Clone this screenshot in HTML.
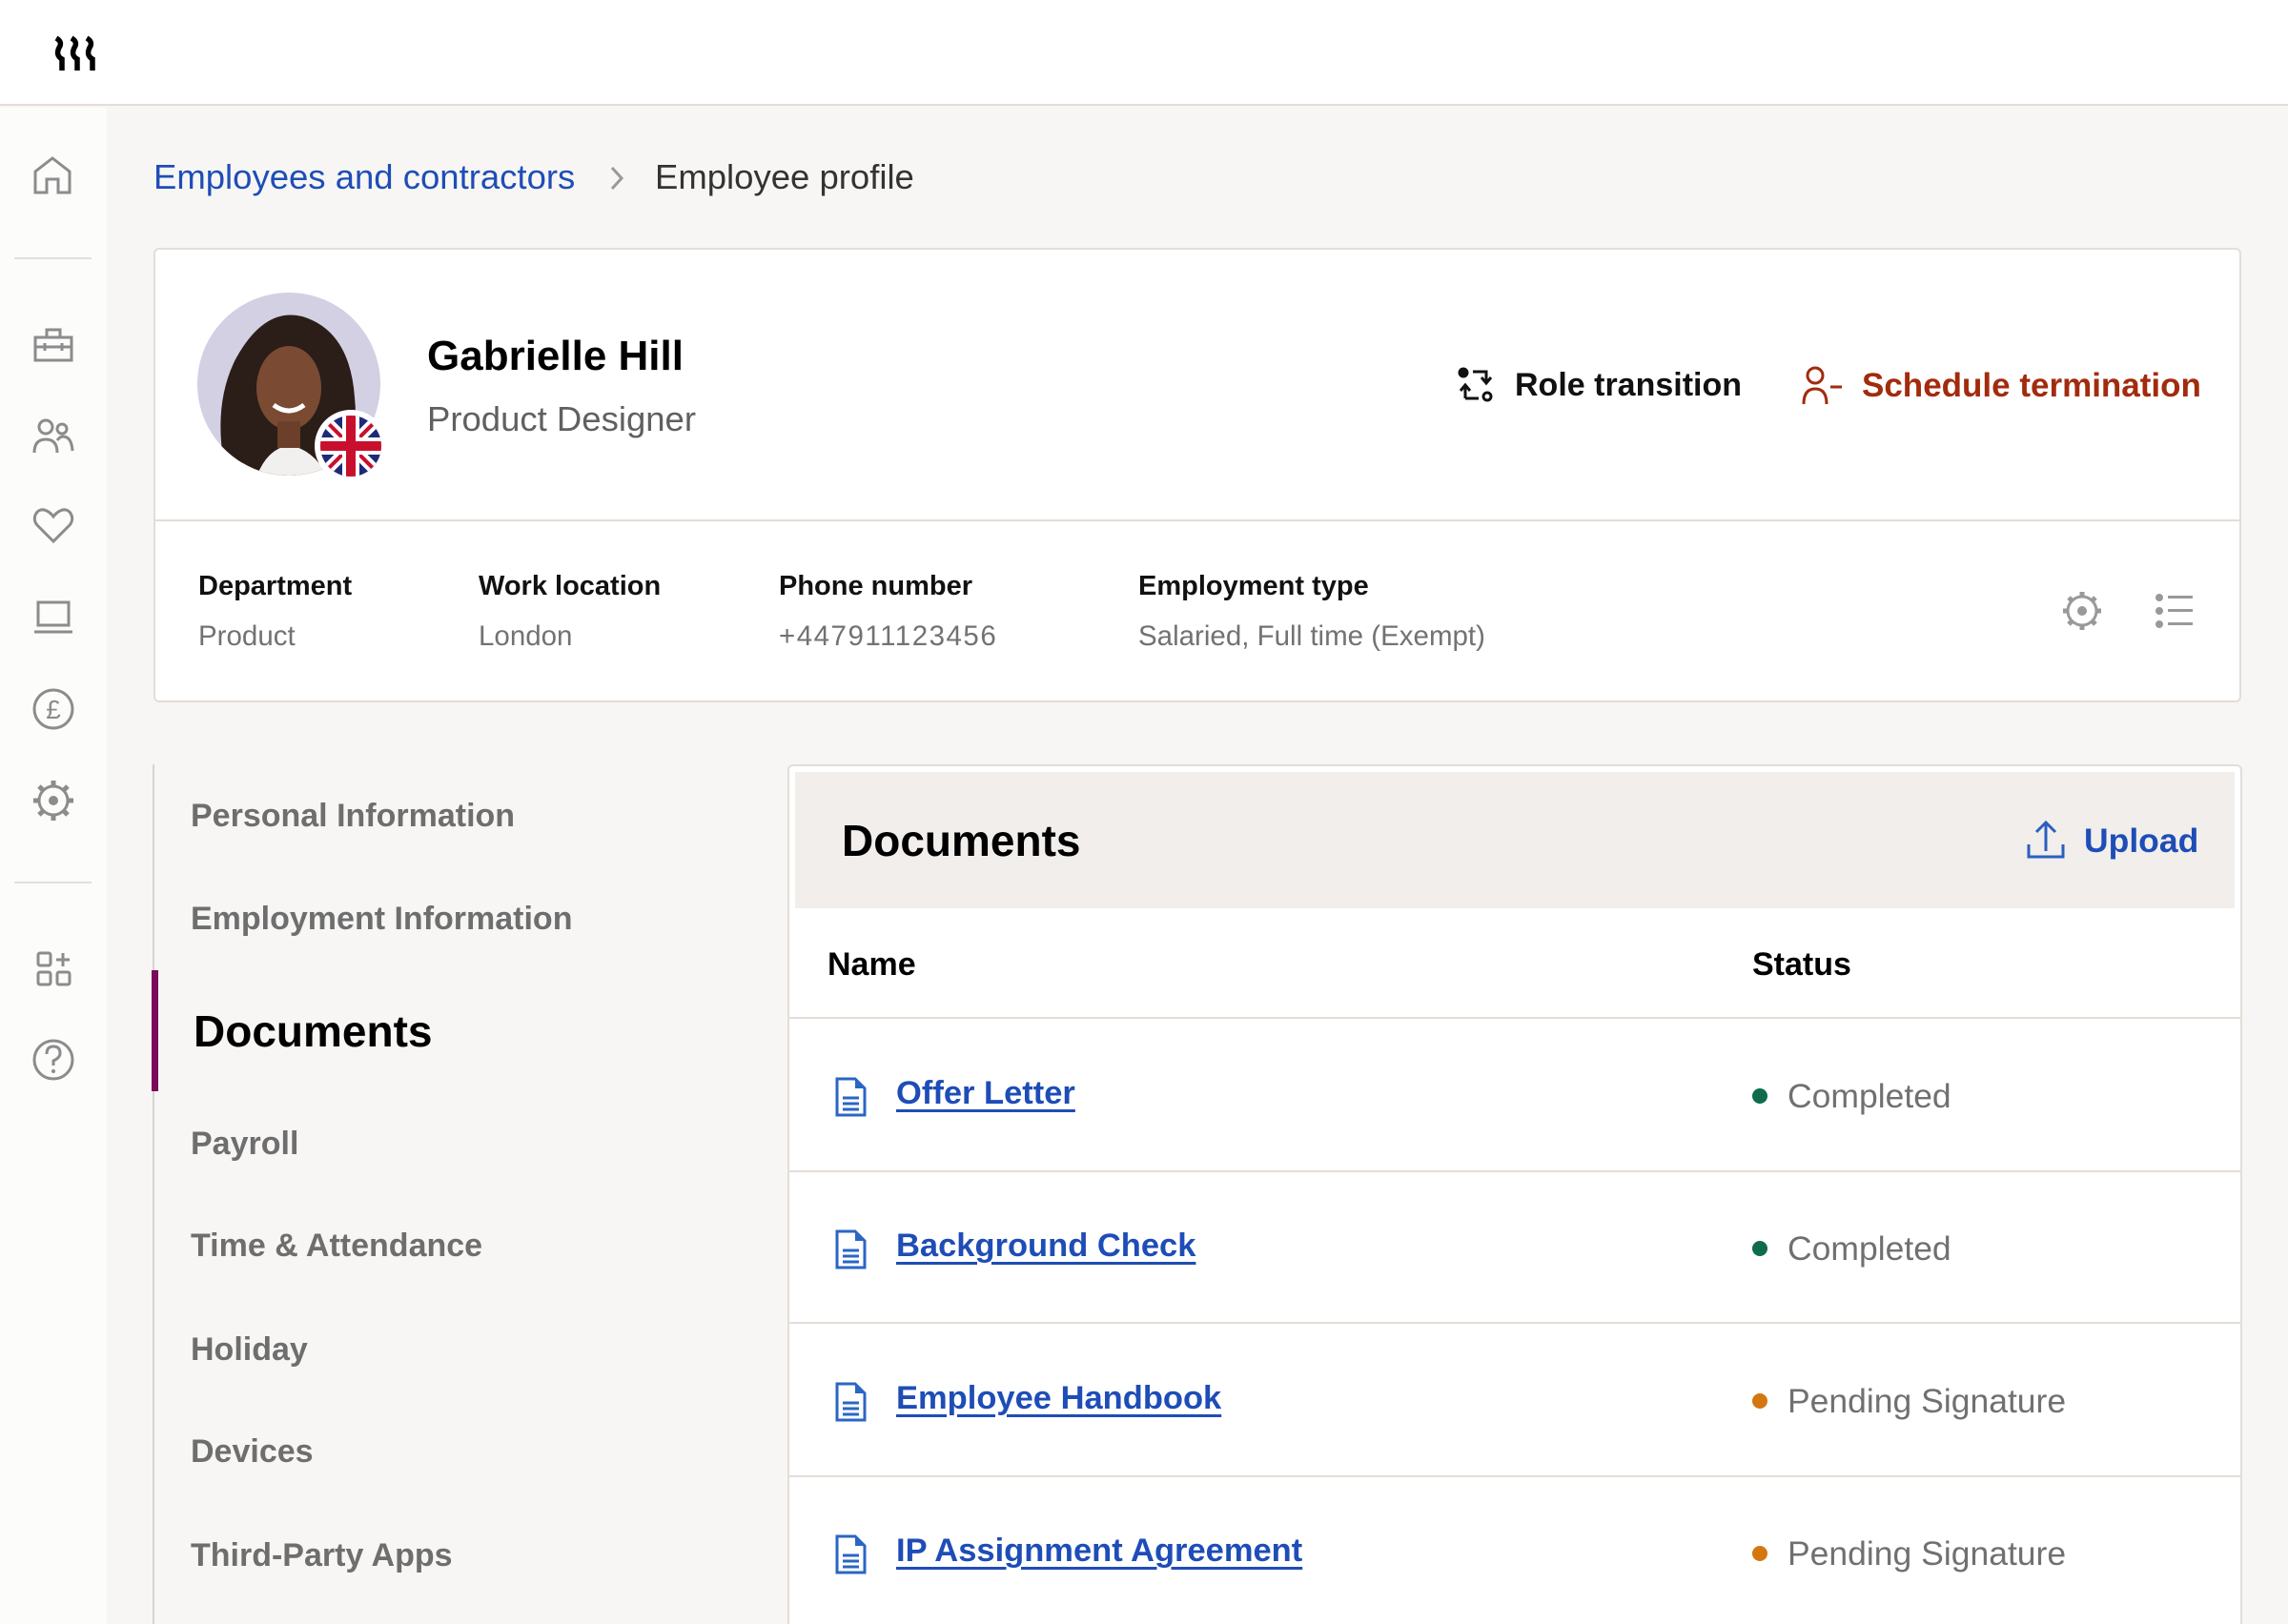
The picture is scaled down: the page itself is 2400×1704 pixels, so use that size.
<!DOCTYPE html>
<html><head><meta charset="utf-8"><style>
*{margin:0;padding:0;box-sizing:border-box}
html,body{overflow:hidden}
body{width:2400px;height:1704px;overflow:hidden;background:#f7f6f4;font-family:"Liberation Sans",sans-serif;position:relative;color:#000}
.a{position:absolute;white-space:nowrap;line-height:1}
svg{position:absolute;overflow:visible}
.si{stroke:#8c8c8c;stroke-width:3;fill:none}
.lbl{font-size:29px;font-weight:600;color:#111}
.val{font-size:29.5px;color:#727272}
.nav{font-size:34px;font-weight:600;color:#6e6e6e;left:200px}
.lnk{font-size:34.5px;font-weight:600;color:#1e4db7;text-decoration:underline;text-decoration-thickness:3px;text-underline-offset:6px;left:940px}
.st{font-size:35.5px;color:#707070;left:1875px}
.dot{position:absolute;width:16px;height:16px;border-radius:50%;left:1838px}
.row{position:absolute;left:828px;width:1522px;height:2px;background:#e4ddd6}
</style></head><body>
<!-- header -->
<div style="position:absolute;left:0;top:0;width:2400px;height:111px;background:#fff;border-bottom:2px solid #e4ddd6"></div>
<svg style="left:56px;top:38px" width="50" height="36" viewBox="0 0 50 36">
<g fill="none" stroke="#000" stroke-width="5.5"><path d="M3 2 q7 4 3 10 q-4 8 3 12 v12"/><path d="M19 2 q7 4 3 10 q-4 8 3 12 v12"/><path d="M35 2 q7 4 3 10 q-4 8 3 12 v12"/></g></svg>
<!-- sidebar -->
<div style="position:absolute;left:0;top:113px;width:112px;height:1591px;background:#fcfcfb"></div>
<svg style="left:35px;top:164px" width="40" height="40"><path class="si" d="M2 38 V16 L20 2 L38 16 V38 H26 V24 H14 V38 Z"/></svg>
<div style="position:absolute;left:15px;top:270px;width:81px;height:2px;background:#e2e0dd"></div>
<svg style="left:35px;top:342px" width="42" height="38"><g class="si"><path d="M2 12 H40 V36 H2 Z M14 12 V4 H28 V12 M2 22 H40 M12 18 V26 M30 18 V26"/></g></svg>
<svg style="left:35px;top:438px" width="42" height="38"><g class="si"><circle cx="13" cy="10" r="7"/><circle cx="30" cy="12" r="5"/><path d="M1 37 q0 -14 12 -14 q12 0 12 14 M25 24 q3 -4 6 -4 q9 0 10 15"/></g></svg>
<svg style="left:35px;top:532px" width="42" height="38"><path class="si" d="M21 36 L4 19 C-3 11 5 -1 14 4 Q18 6 21 10 Q24 6 28 4 C37 -1 45 11 38 19 Z"/></svg>
<svg style="left:35px;top:630px" width="42" height="36"><g class="si"><path d="M5 2 H37 V26 H5 Z"/><path d="M1 33 H41"/></g></svg>
<svg style="left:34px;top:722px" width="44" height="44"><g class="si"><circle cx="22" cy="22" r="20"/></g><text x="22" y="32" text-anchor="middle" font-size="28" font-family="Liberation Sans" fill="#8c8c8c">£</text></svg>
<svg style="left:34px;top:818px" width="44" height="44"><g class="si"><circle cx="22" cy="22" r="15"/><path d="M22 1 V8 M22 36 V43 M1 22 H8 M36 22 H43 M7 7 L12 12 M32 32 L37 37 M37 7 L32 12 M7 37 L12 32" stroke-width="5"/></g><circle cx="22" cy="22" r="5" fill="#8c8c8c"/></svg>
<div style="position:absolute;left:15px;top:925px;width:81px;height:2px;background:#e2e0dd"></div>
<svg style="left:38px;top:998px" width="38" height="38"><g class="si"><rect x="2" y="2" width="13" height="13" rx="2"/><rect x="2" y="22" width="13" height="13" rx="2"/><rect x="22" y="22" width="13" height="13" rx="2"/><path d="M28 2 V16 M21 9 H35"/></g></svg>
<svg style="left:34px;top:1090px" width="44" height="44"><g class="si"><circle cx="22" cy="22" r="20"/><path d="M15 16 q0 -8 7 -8 q7 0 7 7 q0 5 -7 8 v5"/></g><circle cx="22" cy="34" r="2" fill="#8c8c8c"/></svg>
<!-- breadcrumb -->
<div class="a" style="left:161px;top:168px;font-size:36.5px;color:#1e4db7;font-weight:500">Employees and contractors</div>
<svg style="left:640px;top:174px" width="14" height="26"><path d="M2 2 L12 13 L2 24" stroke="#999" stroke-width="3" fill="none"/></svg>
<div class="a" style="left:687px;top:168px;font-size:36.5px;color:#333;font-weight:500">Employee profile</div>
<!-- profile card -->
<div style="position:absolute;left:161px;top:260px;width:2190px;height:477px;background:#fff;border:2px solid #e4ddd6;border-radius:6px"></div>
<div style="position:absolute;left:163px;top:545px;width:2186px;height:2px;background:#e4ddd6"></div>
<svg style="left:207px;top:307px" width="200" height="200">
<defs><clipPath id="c"><circle cx="96" cy="96" r="96"/></clipPath></defs>
<circle cx="96" cy="96" r="96" fill="#d3d0e4"/>
<g clip-path="url(#c)">
<path d="M30 190 Q15 120 40 70 Q70 15 110 25 Q160 40 165 110 Q170 160 150 200 Z" fill="#2b1d18"/>
<path d="M60 200 Q70 165 96 160 Q125 165 140 200 Z" fill="#f2f0ee"/>
<ellipse cx="96" cy="100" rx="34" ry="44" fill="#7a4a32"/>
<rect x="84" y="135" width="24" height="28" fill="#6c3f2a"/>
<path d="M80 118 Q96 130 112 118" stroke="#fff" stroke-width="5" fill="none"/>
</g></svg>
<svg style="left:330px;top:430px" width="76" height="76">
<defs><clipPath id="f"><circle cx="38" cy="38" r="32"/></clipPath></defs>
<circle cx="38" cy="38" r="38" fill="#fff"/>
<g clip-path="url(#f)"><rect width="76" height="76" fill="#1e2a78"/>
<path d="M0 0 L76 76 M76 0 L0 76" stroke="#fff" stroke-width="12"/>
<path d="M0 0 L76 76 M76 0 L0 76" stroke="#c8102e" stroke-width="4"/>
<path d="M38 0 V76 M0 38 H76" stroke="#fff" stroke-width="18"/>
<path d="M38 0 V76 M0 38 H76" stroke="#c8102e" stroke-width="10"/></g></svg>
<div class="a" style="left:448px;top:352px;font-size:44px;font-weight:600;color:#000">Gabrielle Hill</div>
<div class="a" style="left:448px;top:422px;font-size:36.5px;color:#606060">Product Designer</div>
<svg style="left:1529px;top:385px" width="38" height="38"><g fill="none" stroke="#111" stroke-width="3"><circle cx="6" cy="6" r="4" fill="#111"/><path d="M16 5 H30 V16 M25 11 L30 17 L35 11"/><path d="M8 33 H22 M8 33 V20 M3 25 L8 19 L13 25"/><circle cx="31" cy="31" r="4"/></g></svg>
<div class="a" style="left:1589px;top:387px;font-size:34px;font-weight:600;color:#111">Role transition</div>
<svg style="left:1890px;top:384px" width="46" height="40"><g fill="none" stroke="#a22b0d" stroke-width="3"><circle cx="14" cy="10" r="8"/><path d="M2 40 q0 -16 12 -16 q12 0 12 16 M30 22 H42"/></g></svg>
<div class="a" style="left:1953px;top:387px;font-size:35px;font-weight:600;color:#a22b0d">Schedule termination</div>
<div class="a lbl" style="left:208px;top:601px">Department</div>
<div class="a val" style="left:208px;top:653px">Product</div>
<div class="a lbl" style="left:502px;top:601px">Work location</div>
<div class="a val" style="left:502px;top:653px">London</div>
<div class="a lbl" style="left:817px;top:601px">Phone number</div>
<div class="a val" style="left:817px;top:653px;letter-spacing:1.5px">+447911123456</div>
<div class="a lbl" style="left:1194px;top:601px">Employment type</div>
<div class="a val" style="left:1194px;top:653px">Salaried, Full time (Exempt)</div>
<svg style="left:2162px;top:619px" width="44" height="44"><g fill="none" stroke="#999" stroke-width="3"><circle cx="22" cy="22" r="15"/><path d="M22 2 V8 M22 36 V42 M2 22 H8 M36 22 H42 M8 8 L12 12 M32 32 L36 36 M36 8 L32 12 M8 36 L12 32" stroke-width="5"/></g><circle cx="22" cy="22" r="5" fill="#999"/></svg>
<svg style="left:2260px;top:622px" width="42" height="40"><g fill="#999"><circle cx="5" cy="5" r="4"/><circle cx="5" cy="19" r="4"/><circle cx="5" cy="33" r="4"/><rect x="14" y="3" width="26" height="3"/><rect x="14" y="17" width="26" height="3"/><rect x="14" y="31" width="26" height="3"/></g></svg>
<!-- left nav -->
<div style="position:absolute;left:160px;top:802px;width:2px;height:902px;background:#d6d3cf"></div>
<div style="position:absolute;left:159px;top:1018px;width:7px;height:127px;background:#7a0b5b"></div>
<div class="a nav" style="top:839px">Personal Information</div>
<div class="a nav" style="top:947px">Employment Information</div>
<div class="a" style="left:203px;top:1059px;font-size:46px;font-weight:600;color:#000">Documents</div>
<div class="a nav" style="top:1183px">Payroll</div>
<div class="a nav" style="top:1290px">Time &amp; Attendance</div>
<div class="a nav" style="top:1399px">Holiday</div>
<div class="a nav" style="top:1506px">Devices</div>
<div class="a nav" style="top:1615px">Third-Party Apps</div>
<!-- documents card -->
<div style="position:absolute;left:826px;top:802px;width:1526px;height:902px;background:#fff;border:2px solid #e4ddd6;border-bottom:none;border-radius:6px 6px 0 0"></div>
<div style="position:absolute;left:834px;top:810px;width:1510px;height:143px;background:#f1eeeb"></div>
<div class="a" style="left:883px;top:859px;font-size:46px;font-weight:600;color:#000">Documents</div>
<svg style="left:2126px;top:860px" width="40" height="42"><g fill="none" stroke="#2a5fbf" stroke-width="3"><path d="M2 26 V39 H38 V26 M20 33 V3 M10 13 L20 3 L30 13"/></g></svg>
<div class="a" style="left:2186px;top:865px;font-size:35.5px;font-weight:600;color:#1e4db7">Upload</div>
<div class="a" style="left:868px;top:995px;font-size:34px;font-weight:600">Name</div>
<div class="a" style="left:1838px;top:995px;font-size:34px;font-weight:600">Status</div>
<div class="row" style="top:1067px"></div>
<div class="row" style="top:1228px"></div>
<div class="row" style="top:1387px"></div>
<div class="row" style="top:1548px"></div>
<svg style="left:876px;top:1130px" width="34" height="42"><g fill="none" stroke="#2a66c4" stroke-width="3"><path d="M2 2 H21 L31 12 V40 H2 Z"/><path d="M8 22 H25 M8 28 H25 M8 34 H25"/></g><path d="M21 2 L31 12 H21 Z" fill="#2a66c4"/></svg>
<svg style="left:876px;top:1290px" width="34" height="42"><g fill="none" stroke="#2a66c4" stroke-width="3"><path d="M2 2 H21 L31 12 V40 H2 Z"/><path d="M8 22 H25 M8 28 H25 M8 34 H25"/></g><path d="M21 2 L31 12 H21 Z" fill="#2a66c4"/></svg>
<svg style="left:876px;top:1450px" width="34" height="42"><g fill="none" stroke="#2a66c4" stroke-width="3"><path d="M2 2 H21 L31 12 V40 H2 Z"/><path d="M8 22 H25 M8 28 H25 M8 34 H25"/></g><path d="M21 2 L31 12 H21 Z" fill="#2a66c4"/></svg>
<svg style="left:876px;top:1610px" width="34" height="42"><g fill="none" stroke="#2a66c4" stroke-width="3"><path d="M2 2 H21 L31 12 V40 H2 Z"/><path d="M8 22 H25 M8 28 H25 M8 34 H25"/></g><path d="M21 2 L31 12 H21 Z" fill="#2a66c4"/></svg>
<div class="a lnk" style="top:1130px">Offer Letter</div>
<div class="a lnk" style="top:1290px">Background Check</div>
<div class="a lnk" style="top:1450px">Employee Handbook</div>
<div class="a lnk" style="top:1610px">IP Assignment Agreement</div>
<div class="dot" style="top:1142px;background:#0e6b4e"></div>
<div class="dot" style="top:1302px;background:#0e6b4e"></div>
<div class="dot" style="top:1462px;background:#d5770f"></div>
<div class="dot" style="top:1622px;background:#d5770f"></div>
<div class="a st" style="top:1133px">Completed</div>
<div class="a st" style="top:1293px">Completed</div>
<div class="a st" style="top:1453px">Pending Signature</div>
<div class="a st" style="top:1613px">Pending Signature</div>
</body></html>
